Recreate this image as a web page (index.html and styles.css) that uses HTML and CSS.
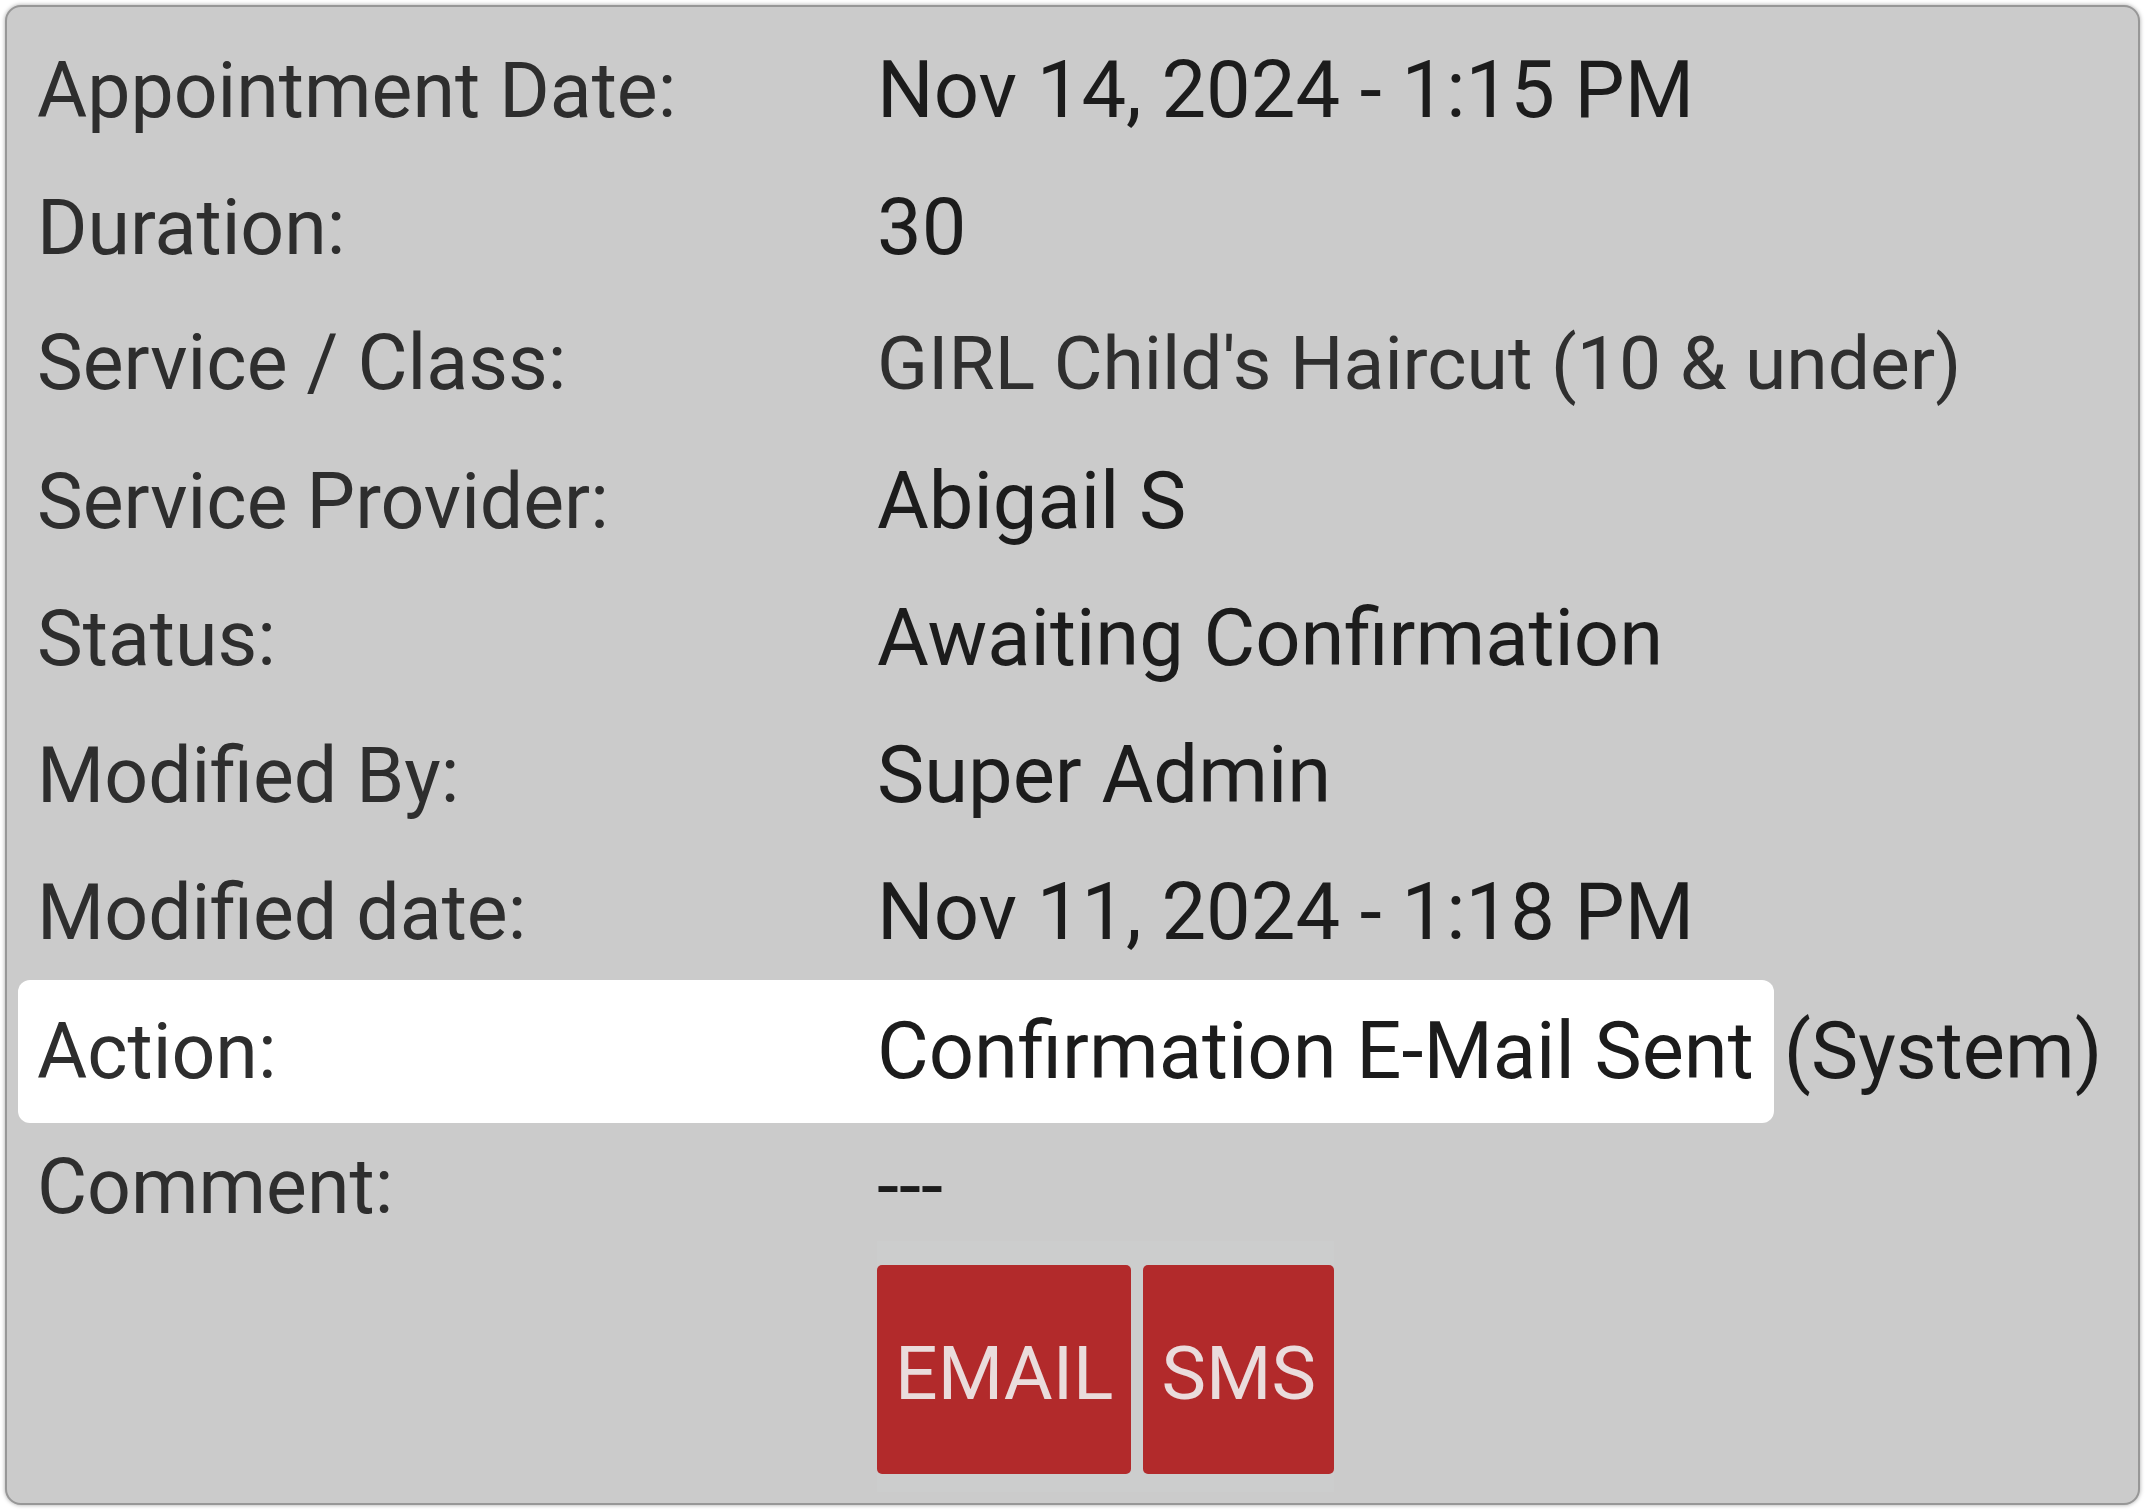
FILE: index.html
```html
<!DOCTYPE html>
<html lang="en">
<head>
    <meta charset="UTF-8">
    <meta name="viewport" content="width=device-width, initial-scale=1.0">
    <title>Appointment Details</title>
    <link rel="stylesheet" href="styles.css">
</head>
<body>
    <div class="card">
        <div class="row">
            <span class="label">Appointment Date:</span>
            <span class="value">Nov 14, 2024 - 1:15 PM</span>
        </div>
        <div class="row">
            <span class="label">Duration:</span>
            <span class="value">30</span>
        </div>
        <div class="row">
            <span class="label">Service / Class:</span>
            <span class="value service">GIRL Child's Haircut (10 &amp; under)</span>
        </div>
        <div class="row">
            <span class="label">Service Provider:</span>
            <span class="value">Abigail S</span>
        </div>
        <div class="row">
            <span class="label">Status:</span>
            <span class="value">Awaiting Confirmation</span>
        </div>
        <div class="row">
            <span class="label">Modified By:</span>
            <span class="value">Super Admin</span>
        </div>
        <div class="row">
            <span class="label">Modified date:</span>
            <span class="value">Nov 11, 2024 - 1:18 PM</span>
        </div>
        <div class="row">
            <div class="highlight">
                <span class="label">Action:</span>
                <span class="value">Confirmation E-Mail Sent</span>
            </div>
            <span class="value system">(System)</span>
        </div>
        <div class="row">
            <span class="label">Comment:</span>
            <span class="value">---</span>
        </div>
        <div class="actions">
            <button class="btn">EMAIL</button>
            <button class="btn">SMS</button>
        </div>
    </div>
</body>
</html>
```

FILE: styles.css
```css
html, body {
    margin: 0;
    background: #ffffff;
}

body {
    padding: 5px;
    font-family: Roboto, "Noto Sans", Arial, sans-serif;
}

.card {
    box-sizing: border-box;
    height: 1500px;
    padding: 14px 0 0 30px;
    background: #cbcbcb;
    border: 2px solid #979797;
    border-radius: 16px;
    box-shadow: 0 0 4px rgba(0, 0, 0, 0.35);
}

.row {
    display: flex;
    align-items: baseline;
    height: 137px;
    line-height: 137px;
    white-space: nowrap;
}

.label {
    width: 840px;
    flex-shrink: 0;
    font-size: 77px;
    color: #2e2e2e;
}

.value {
    font-size: 79.5px;
    color: #1c1c1c;
}

.value.service {
    font-size: 75px;
    color: #2f2f2f;
}

/* white box behind the action row */
.highlight {
    display: flex;
    align-items: baseline;
    margin-left: -19px;
    padding: 0 20px 0 19px;
    background: #ffffff;
    border-radius: 12px;
    line-height: 141px;
}

.system {
    margin-left: 10px;
}

.actions {
    display: inline-flex;
    gap: 12px;
    margin: -13px 0 0 840px;
    padding: 24px 0 18px;
    background: #cccdcd;
}

.btn {
    height: 209px;
    padding: 6px 18px 0;
    font-family: Roboto, "Noto Sans", Arial, sans-serif;
    font-size: 75px;
    color: #eadcdc;
    background-color: #b22a2b;
    border: none;
    border-radius: 5px;
    cursor: pointer;
}
```
